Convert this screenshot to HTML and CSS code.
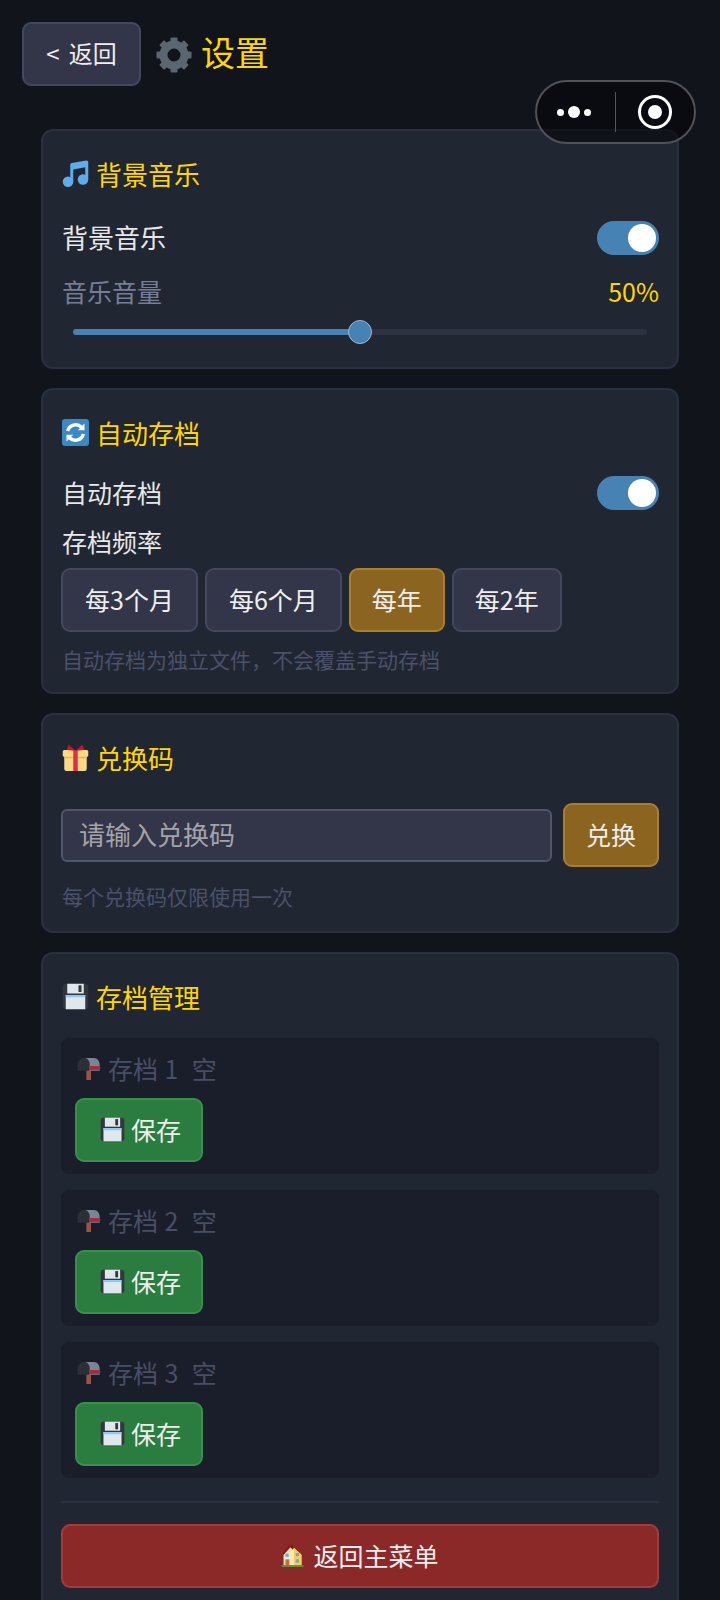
FILE: index.html
```html
<!DOCTYPE html>
<html lang="zh-CN">
<head>
  <meta charset="UTF-8">
  <title>设置</title>
  <link rel="stylesheet" href="styles.css">
</head>
<body>
  <svg class="defs" width="0" height="0">
    <symbol id="floppy" viewBox="0 0 36 36">
      <rect x="1" y="1" width="34" height="34" rx="4" fill="#31373d"/>
      <rect x="7" y="1" width="22" height="13" fill="#e1e8ed"/>
      <rect x="22" y="3" width="4" height="9" fill="#31373d"/>
      <rect x="5" y="16" width="26" height="19" fill="#e1e8ed"/>
      <rect x="5" y="16" width="26" height="3" fill="#88c9f9"/>
    </symbol>
    <symbol id="mailbox" viewBox="0 0 36 36">
      <rect x="14" y="20" width="7" height="16" fill="#c1694f"/>
      <path d="M10 3h15c6 0 9 5 9 11v8H18V12c0-5-3-9-8-9z" fill="#99aab5"/>
      <path d="M10 3c-6 0-9 5-9 11v8h18V12c0-5-4-9-9-9z" fill="#31373d"/>
      <path d="M18 15h14c2 0 3 1 3 3s-1 3-3 3H18z" fill="#dd2e44"/>
    </symbol>
  </svg>

  <div class="page">
    <div class="capsule">
      <div class="capsule-dots"><i></i><b></b><i></i></div>
      <div class="capsule-line"></div>
      <div class="capsule-target"><span></span></div>
    </div>

    <div class="header">
      <button class="btn back-btn">&lt; 返回</button>
      <svg class="gear" viewBox="0 0 36 36">
        <circle cx="18" cy="18" r="10.500" fill="none" stroke="#5a6670" stroke-width="8"/>
        <g fill="#5a6670">
          <rect x="14.500" y="0.500" width="7" height="7" rx="1"/>
          <rect x="14.500" y="28.500" width="7" height="7" rx="1"/>
          <rect x="0.500" y="14.500" width="7" height="7" rx="1"/>
          <rect x="28.500" y="14.500" width="7" height="7" rx="1"/>
          <rect x="14.500" y="0.500" width="7" height="7" rx="1" transform="rotate(45 18 18)"/>
          <rect x="14.500" y="28.500" width="7" height="7" rx="1" transform="rotate(45 18 18)"/>
          <rect x="0.500" y="14.500" width="7" height="7" rx="1" transform="rotate(45 18 18)"/>
          <rect x="28.500" y="14.500" width="7" height="7" rx="1" transform="rotate(45 18 18)"/>
        </g>
      </svg>
      <h1 class="page-title">设置</h1>
    </div>

    <div class="card card-music">
      <div class="card-title">
        <svg class="icon" viewBox="0 0 36 36">
          <g fill="#5dadec">
            <circle cx="8" cy="29" r="7"/>
            <circle cx="28" cy="26" r="7"/>
            <path d="M11 29V6.500c0-1.200.8-2.200 2-2.400L32 .8c1.700-.3 3 .8 3 2.400V26h-4V9.500L15 12.500V29z"/>
          </g>
        </svg>
        背景音乐
      </div>
      <div class="row row-music">
        <span class="label label-big">背景音乐</span>
        <div class="toggle"><span></span></div>
      </div>
      <div class="row row-volume">
        <span class="label label-dim">音乐音量</span>
        <span class="volume-value">50%</span>
      </div>
      <div class="slider">
        <div class="slider-fill" style="width: 50%"></div>
        <div class="slider-thumb"></div>
        <div class="slider-rest"></div>
      </div>
    </div>

    <div class="card card-auto">
      <div class="card-title">
        <svg class="icon" viewBox="0 0 36 36">
          <rect width="36" height="36" rx="4" fill="#3b88c3"/>
          <path fill="none" stroke="#fff" stroke-width="4.500" d="M7.500 16A11 11 0 0 1 26 11M28.500 20A11 11 0 0 1 10 25"/>
          <path fill="#fff" d="M30 6v9h-9zM6 30v-9h9z"/>
        </svg>
        自动存档
      </div>
      <div class="row row-auto">
        <span class="label">自动存档</span>
        <div class="toggle"><span></span></div>
      </div>
      <div class="label label-freq">存档频率</div>
      <div class="freq-list">
        <button class="btn freq-btn freq-long">每3个月</button>
        <button class="btn freq-btn freq-long">每6个月</button>
        <button class="btn freq-btn active">每年</button>
        <button class="btn freq-btn">每2年</button>
      </div>
      <div class="hint hint-auto">自动存档为独立文件，不会覆盖手动存档</div>
    </div>

    <div class="card card-code">
      <div class="card-title">
        <svg class="icon" viewBox="0 0 36 36">
          <path fill="#fdd888" d="M3 13h30v20a3 3 0 0 1-3 3H6a3 3 0 0 1-3-3z"/>
          <path fill="#ffd983" d="M1 10a2 2 0 0 1 2-2h30a2 2 0 0 1 2 2v5a2 2 0 0 1-2 2H3a2 2 0 0 1-2-2z"/>
          <path fill="#f5b04d" d="M3 17h30v2H3z"/>
          <rect x="15" y="8" width="6" height="28" fill="#dd2e44"/>
          <path fill="#be1931" d="M18 9 9 1 6 8zM18 9l9-8 3 7z"/>
        </svg>
        兑换码
      </div>
      <div class="code-row">
        <input class="code-input" type="text" placeholder="请输入兑换码">
        <button class="btn gold-btn">兑换</button>
      </div>
      <div class="hint hint-code">每个兑换码仅限使用一次</div>
    </div>

    <div class="card card-save">
      <div class="card-title">
        <svg class="icon"><use href="#floppy"/></svg>
        存档管理
      </div>

      <div class="slot">
        <div class="slot-name"><svg class="slot-icon"><use href="#mailbox"/></svg>存档 1  空</div>
        <button class="btn save-btn"><svg class="save-icon"><use href="#floppy"/></svg>保存</button>
      </div>
      <div class="slot">
        <div class="slot-name"><svg class="slot-icon"><use href="#mailbox"/></svg>存档 2  空</div>
        <button class="btn save-btn"><svg class="save-icon"><use href="#floppy"/></svg>保存</button>
      </div>
      <div class="slot">
        <div class="slot-name"><svg class="slot-icon"><use href="#mailbox"/></svg>存档 3  空</div>
        <button class="btn save-btn"><svg class="save-icon"><use href="#floppy"/></svg>保存</button>
      </div>

      <div class="divider"></div>

      <button class="btn menu-btn">
        <svg class="menu-icon" viewBox="0 0 36 36">
          <path fill="#ffe8b6" d="M4 16 14 5l4 3 2-2 12 11v17H4z"/>
          <path fill="#a0041e" d="M13 2 2 16l2 1L14 6z"/>
          <path fill="#ffcc4d" d="M20 6 32 17v17H20z"/>
          <path fill="#662113" d="M14 2h4l2 4-2 3z"/>
          <rect x="7" y="24" width="6" height="10" fill="#c1694f"/>
          <rect x="7" y="15" width="5" height="5" fill="#55acee"/>
          <rect x="23" y="14" width="5" height="5" fill="#55acee"/>
          <rect x="23" y="24" width="5" height="5" fill="#55acee"/>
          <rect x="1" y="33" width="34" height="3" fill="#5c913b"/>
        </svg>
        返回主菜单
      </button>
    </div>
  </div>
</body>
</html>
```

FILE: styles.css
```css
html, body {
  margin: 0;
  padding: 0;
  background: #12141c;
}
body {
  font-family: "Noto Sans CJK SC", "Noto Sans", sans-serif;
  color: #e6e6e6;
}
.defs {
  position: absolute;
}
.page {
  position: relative;
  height: 1600px;
  overflow: hidden;
  box-sizing: border-box;
  padding-top: 22px;
}

/* top bar */
.header {
  display: flex;
  align-items: center;
  height: 64px;
  padding-left: 22px;
}
.btn {
  font-family: inherit;
  box-sizing: border-box;
  border-radius: 9px;
  border: 2px solid #44485e;
  background: #323648;
  color: #eeeeee;
  font-size: 25px;
  line-height: 30px;
  padding: 0 0 2px;
}
.back-btn {
  width: 119px;
  height: 64px;
  font-size: 24px;
  word-spacing: 4px;
}
.gear {
  width: 36px;
  height: 36px;
  margin: 2px 0 0 15px;
}
.page-title {
  margin: 0 0 4px 9px;
  font-size: 34px;
  line-height: 44px;
  font-weight: 400;
  color: #ffd700;
}

/* wechat capsule */
.capsule {
  position: absolute;
  top: 80px;
  left: 535px;
  width: 161px;
  height: 64px;
  box-sizing: border-box;
  display: flex;
  align-items: center;
  border: 2px solid #505159;
  border-radius: 32px;
  background: rgba(5, 5, 8, 0.6);
}
.capsule-dots {
  width: 74px;
  display: flex;
  align-items: center;
  justify-content: center;
  gap: 4px;
}
.capsule-dots i {
  width: 7px;
  height: 7px;
  border-radius: 50%;
  background: #fff;
}
.capsule-dots b {
  width: 12px;
  height: 12px;
  border-radius: 50%;
  background: #fff;
}
.capsule-line {
  width: 1px;
  height: 40px;
  margin-left: 4px;
  background: #55565c;
}
.capsule-target {
  flex: 1;
  display: flex;
  justify-content: center;
}
.capsule-target span {
  width: 34px;
  height: 34px;
  box-sizing: border-box;
  border: 3px solid #fff;
  border-radius: 50%;
  display: flex;
  align-items: center;
  justify-content: center;
}
.capsule-target span::after {
  content: "";
  width: 14px;
  height: 14px;
  border-radius: 50%;
  background: #fff;
}

/* cards */
.card {
  box-sizing: border-box;
  margin: 19px 41px 0;
  padding: 20px 18px 18px;
  background: #212633;
  border: 2px solid #2a2f41;
  border-radius: 12px;
}
.card-music {
  margin-top: 43px;
  padding-bottom: 23px;
}
.card-auto {
  padding-bottom: 17px;
}
.card-code {
  padding-bottom: 19px;
}
.card-save {
  padding-bottom: 60px;
}
.card-title {
  display: flex;
  align-items: center;
  gap: 7px;
  height: 46px;
  box-sizing: border-box;
  padding-bottom: 2px;
  font-size: 26px;
  color: #ffd700;
}
.icon {
  width: 27px;
  height: 27px;
  margin-left: 1px;
}

.row {
  display: flex;
  align-items: center;
  justify-content: space-between;
}
.row-music {
  margin-top: 24px;
  height: 34px;
}
.row-auto {
  margin-top: 20px;
  height: 34px;
}
.row-volume {
  margin-top: 22px;
  height: 30px;
}
.label {
  font-size: 25px;
  line-height: 30px;
  padding: 0 0 3px 1px;
  color: #e8e8e8;
}
.label-big {
  font-size: 26px;
}
.label-dim {
  padding-bottom: 2px;
  color: #767e96;
}
.label-freq {
  margin-top: 16px;
  padding-bottom: 1px;
}
.volume-value {
  font-size: 25px;
  padding-bottom: 2px;
  color: #ffd700;
}
.toggle {
  width: 62px;
  height: 34px;
  box-sizing: border-box;
  padding-right: 3px;
  display: flex;
  align-items: center;
  justify-content: flex-end;
  border-radius: 17px;
  background: #4682b4;
}
.toggle span {
  width: 28px;
  height: 28px;
  border-radius: 50%;
  background: #fff;
}

.slider {
  display: flex;
  align-items: center;
  height: 24px;
  margin: 13px 12px 0;
}
.slider-fill {
  height: 6px;
  background: #4682b4;
  border-radius: 3px 0 0 3px;
}
.slider-thumb {
  flex: none;
  width: 24px;
  height: 24px;
  box-sizing: border-box;
  margin: 0 -12px;
  position: relative;
  border: 1px solid #9db8d0;
  border-radius: 50%;
  background: #4682b4;
}
.slider-rest {
  flex: 1;
  height: 6px;
  background: #2d3240;
  border-radius: 0 3px 3px 0;
}

.freq-list {
  display: flex;
  gap: 7px;
  margin-top: 11px;
}
.freq-btn {
  height: 64px;
  padding: 0 21px 2px;
}
.freq-long {
  padding: 0 22px 2px;
}
.freq-btn.active,
.gold-btn {
  background: #8b6420;
  border-color: #a97f2c;
}
.hint {
  font-size: 21px;
  line-height: 30px;
  padding-left: 1px;
  color: #4b5169;
}
.hint-auto {
  margin: 12px 0 1px;
}
.hint-code {
  margin: 14px 0 1px;
}

.code-row {
  display: flex;
  align-items: center;
  gap: 11px;
  margin-top: 22px;
}
.code-input {
  flex: 1;
  min-width: 0;
  height: 53px;
  box-sizing: border-box;
  padding: 0 0 4px 16px;
  font-family: inherit;
  font-size: 26px;
  color: #eee;
  background: #323648;
  border: 2px solid #51556b;
  border-radius: 6px;
}
.code-input::placeholder {
  color: #a3a3a8;
  opacity: 1;
}
.gold-btn {
  flex: none;
  width: 96px;
  height: 64px;
}

/* save slots */
.slot {
  height: 136px;
  box-sizing: border-box;
  margin-top: 16px;
  padding: 15px 14px 0;
  background: #1a1e2a;
  border-radius: 8px;
}
.card-title + .slot {
  margin-top: 18px;
}
.slot-name {
  display: flex;
  align-items: center;
  gap: 7px;
  height: 30px;
  padding-left: 2px;
  font-size: 25px;
  word-spacing: 1px;
  color: #484e64;
  white-space: pre;
}
.slot-icon {
  width: 24px;
  height: 24px;
  opacity: 0.75;
}
.save-btn {
  display: flex;
  align-items: center;
  justify-content: center;
  gap: 6px;
  width: 128px;
  height: 64px;
  margin-top: 15px;
  background: #2b7d3f;
  border-color: #3a8f4c;
}
.save-icon {
  width: 25px;
  height: 25px;
  margin-left: 3px;
}
.divider {
  height: 2px;
  margin-top: 23px;
  background: #2c3142;
}
.menu-btn {
  display: flex;
  align-items: center;
  justify-content: center;
  gap: 9px;
  width: 100%;
  height: 64px;
  margin-top: 21px;
  background: #8b2828;
  border-color: #a63a3a;
}
.menu-icon {
  width: 23px;
  height: 23px;
}
```
